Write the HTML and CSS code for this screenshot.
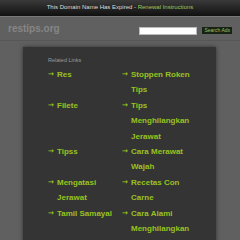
FILE: index.html
```html
<!DOCTYPE html>
<html lang="en">
  <head>
    <meta charset="UTF-8" />
    <title>restips.org</title>
    <link rel="stylesheet" href="styles.css">
  </head>
  <body>
    <div class="topbar">
      This Domain Name Has Expired - <a href="#">Renewal Instructions</a>
    </div>
    <div class="header">
      <div class="logo">restips.org</div>
      <form class="search">
        <input class="searchInput" type="text" />
        <button class="searchBTN" type="button">Search Ads</button>
      </form>
    </div>
    <div class="panel">
      <div class="related">Related Links</div>
      <ul class="links">
        <li><a href="#">Res</a></li>
        <li><a href="#">Stoppen Roken Tips</a></li>
        <li><a href="#">Filete</a></li>
        <li><a href="#">Tips Menghilangkan Jerawat</a></li>
        <li><a href="#">Tipss</a></li>
        <li><a href="#">Cara Merawat Wajah</a></li>
        <li><a href="#">Mengatasi Jerawat</a></li>
        <li><a href="#">Recetas Con Carne</a></li>
        <li><a href="#">Tamil Samayal</a></li>
        <li><a href="#">Cara Alami Menghilangkan Jerawat</a></li>
      </ul>
    </div>
  </body>
</html>
```
FILE: styles.css
```css
:root {
  --link-color: #99c21f;
  --panel-bg: #343434;
  --page-bg: #606060;
}

body {
  margin: 0;
  background-color: var(--page-bg);
  font-family: "Liberation Sans", Arial, sans-serif;
  overflow: hidden;
}

.topbar {
  height: 16px;
  line-height: 15px;
  text-align: center;
  font-size: 6px;
  color: #ddd;
  background: linear-gradient(#3a3a3a, #101010);
  border-bottom: 1px solid #777;
}

.topbar a {
  color: #a5c25a;
  text-decoration: none;
}

.header {
  height: 23px;
  display: flex;
  align-items: center;
  padding: 0 8px;
  border-bottom: 1px solid #575757;
}

.logo {
  font-size: 10px;
  font-weight: bold;
  color: #868686;
}

.search {
  margin: 4px 0 0 auto;
  display: flex;
  align-items: center;
}

.searchInput {
  width: 56px;
  height: 6px;
  padding: 0;
  border: 1px solid #bbb;
  background-color: #fff;
}

.searchBTN {
  margin-left: 5px;
  height: 7px;
  padding: 0 2px;
  font-size: 5px;
  line-height: 7px;
  font-family: "Liberation Sans", Arial, sans-serif;
  color: #9fbf6a;
  background-color: #172413;
  border: none;
}

.panel {
  margin: 6px 24px 0 23px;
  height: 300px;
  background-color: var(--panel-bg);
  box-shadow: 0 0 4px rgba(0, 0, 0, 0.5);
  padding: 10px 0 0 25px;
}

.related {
  font-size: 5.5px;
  color: #9a9a9a;
  margin-bottom: 4px;
}

.links {
  display: grid;
  grid-template-columns: 74px 74px;
  align-items: start;
  list-style: none;
  margin: 0;
  padding: 0;
}

.links li {
  position: relative;
  padding-left: 9px;
  font-size: 8px;
  font-weight: bold;
  line-height: 15.4px;
}

.links li::before {
  content: "\2192";
  position: absolute;
  left: 0;
  font-family: "DejaVu Sans", sans-serif;
  font-size: 7px;
  color: var(--link-color);
}

.links a {
  color: var(--link-color);
  text-decoration: none;
}
```
